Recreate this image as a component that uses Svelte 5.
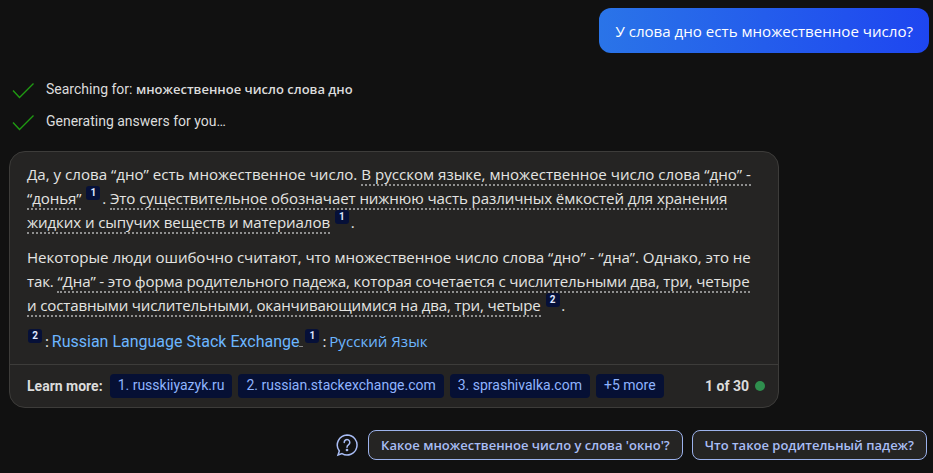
<script>
  const chips = ['1. russkiiyazyk.ru', '2. russian.stackexchange.com', '3. sprashivalka.com', '+5 more'];
  const suggestions = ["Какое множественное число у слова 'окно'?", 'Что такое родительный падеж?'];
  const steps = [
    { label: 'Searching for: ', strong: 'множественное число слова дно' },
    { label: 'Generating answers for you…', strong: '' }
  ];
</script>

<main class="page">
  <div class="user-row"><div class="bubble">У слова дно есть множественное число?</div></div>

  <div class="steps">
    {#each steps as s}
      <div class="step">
        <svg class="check" width="23" height="16" viewBox="0 0 23 16" fill="none"><path d="M1 7.5 L7.5 14.5 L21.5 .5" stroke="#1f9a12" stroke-width="1.4"/></svg>
        <span>{s.label}<b>{s.strong}</b></span>
      </div>
    {/each}
  </div>

  <section class="card">
    <div class="body">
      <p>
        <span class="ln wide">Да, у слова “дно” есть множественное число. <span class="u">В русском языке, множественное число слова “дно” -</span></span>
        <span class="ln"><span class="u">“донья” </span><sup class="ref">1</sup> . <span class="u">Это существительное обозначает нижнюю часть различных ёмкостей для хранения</span></span>
        <span class="ln"><span class="u">жидких и сыпучих веществ и материалов </span><sup class="ref">1</sup> .</span>
      </p>
      <p>
        <span class="ln mid">Некоторые люди ошибочно считают, что множественное число слова “дно” - “дна”. Однако, это не</span>
        <span class="ln tight">так. <span class="u">“Дна” - это форма родительного падежа, которая сочетается с числительными два, три, четыре</span></span>
        <span class="ln tighter"><span class="u">и составными числительными, оканчивающимися на два, три, четыре </span><sup class="ref">2</sup> .</span>
      </p>
      <p class="refs"><sup class="ref first">2</sup> : <a href="#a" class="big">Russian Language Stack Exchange</a><span class="gap"></span><sup class="ref first next">1</sup> : <a href="#b">Русский Язык</a></p>
    </div>
    <footer class="foot">
      <b class="learn">Learn more:</b>
      {#each chips as c}<span class="chip">{c}</span>{/each}
      <span class="count"><b>1 of 30</b><i class="dot"></i></span>
    </footer>
  </section>

  <div class="suggest">
    <svg width="24" height="24" viewBox="0 0 24 24" fill="none" stroke="#a9bdf5" stroke-width="1.5"><path d="M12 2a10 10 0 1 1-5 18.66L3 22l1.34-4A10 10 0 0 1 12 2Z"/><path d="M9.2 9.4a2.8 2.8 0 1 1 4.4 2.3c-1 .7-1.6 1.2-1.6 2.5" stroke-linecap="round"/><circle cx="12" cy="17" r=".6" fill="#a9bdf5"/></svg>
    {#each suggestions as q}<button>{q}</button>{/each}
  </div>
</main>

<style>
  :global(body) { margin: 0; background: #111111; }
  .page { width: 933px; height: 473px; box-sizing: border-box; padding: 8px 4px 0 9px; overflow: hidden; font-family: Roboto, "Noto Sans", sans-serif; color: #e6e6e6; font-size: 14px; }
  .user-row { display: flex; justify-content: flex-end; }
  .bubble { background: linear-gradient(90deg, #2a74e8, #1e46f0); color: #fff; font-family: "Open Sans", sans-serif; font-size: 15.1px; line-height: 24px; padding: 10.5px 16px; border-radius: 12px; }
  .steps { margin-top: 24px; display: flex; flex-direction: column; gap: 8px; }
  .step { display: flex; align-items: center; gap: 11px; height: 24px; padding-left: 3px; font-size: 14px; color: #dcdcdc; }
  .check { flex: none; margin-top: 3px; }
  .step b { font-family: "Open Sans", sans-serif; font-weight: 600; font-size: 13px; }
  .card { margin-top: 18px; width: 770px; box-sizing: border-box; background: #252423; border: 1px solid #3d3c3a; border-radius: 16px; }
  .body { padding: 10px 17px 11px; font-family: "Open Sans", sans-serif; font-size: 15.1px; line-height: 24px; color: #e4e4e2; }
  p { margin: 0 0 11px; }
  p.refs { margin: 12px 0 0; height: 24px; word-spacing: -1px; padding-left: 1px; }
  .ln { display: block; white-space: nowrap; letter-spacing: -0.1px; }
  .ln.wide { letter-spacing: 0; }
  .ln.mid { letter-spacing: -0.05px; }
  .ln.tight { letter-spacing: -0.14px; }
  .ln.tighter { letter-spacing: -0.16px; }
  .u { border-bottom: 2px dotted #8f8f8f; }
  .ref { display: inline-block; min-width: 14px; height: 14px; line-height: 14px; text-align: center; font-family: Roboto, sans-serif; font-size: 10px; font-weight: 700; letter-spacing: 0; color: #dfe6ff; background: #061038; border-radius: 3px; vertical-align: 0; transform: translateY(-8px); margin: 0 -2px 0 5px; }
  .ref.first { margin: 0; }
  .ref.next { margin-left: 2px; }
  a { color: #6cb6ff; text-decoration: none; word-spacing: 0; }
  a.big { font-family: Roboto, sans-serif; font-size: 16px; }
  .gap { display: inline-block; width: 4px; border-bottom: 1px solid #888; }
  .foot { display: flex; align-items: center; gap: 6px; height: 43px; box-sizing: border-box; padding: 0 13px 1px 17px; border-top: 1px solid #3d3c3a; font-size: 14px; }
  .learn { margin-right: 1px; color: #dcdcdc; }
  .chip { background: #061034; color: #8fb4ff; padding: 0 8px; height: 24px; line-height: 23px; border-radius: 4px; }
  .count { margin-left: auto; display: flex; align-items: center; gap: 6px; color: #dcdcdc; }
  .dot { width: 10px; height: 10px; border-radius: 50%; background: #2f8f4e; }
  .suggest { display: flex; justify-content: flex-end; align-items: center; gap: 9px; margin-top: 22px; padding-right: 2px; }
  button { font: 600 13px "Open Sans", sans-serif; color: #a9bdf5; background: #252423; border: 1px solid #9cb2ec; border-radius: 8px; height: 30px; padding: 0 12px; }
</style>
